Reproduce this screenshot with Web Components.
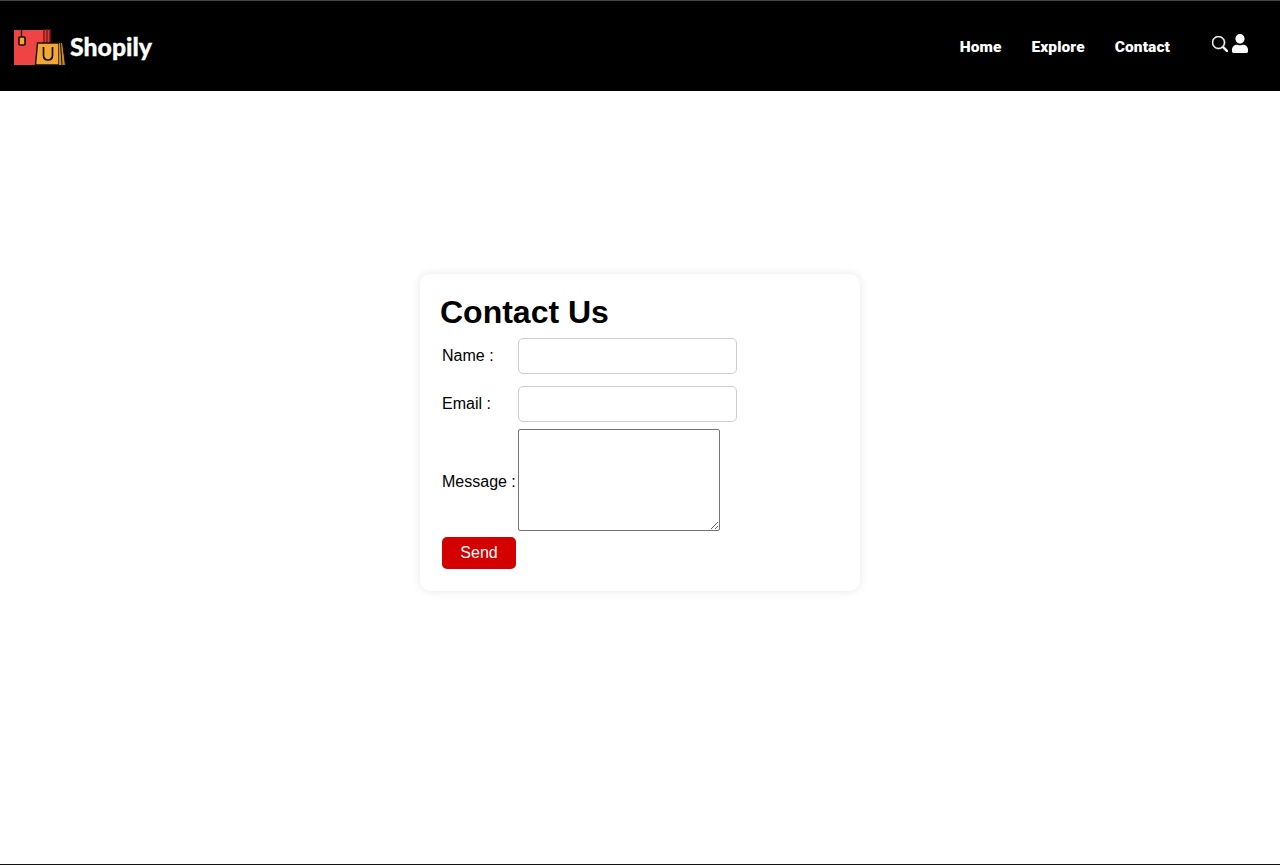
<!DOCTYPE html>
<html lang="en">
<head>
<meta charset="utf-8">
<title>Shopily</title>
<style>
  html, body { margin: 0; height: 100%; background: #fff; }
  body { display: flex; flex-direction: column; font-family: "Liberation Sans", Arial, sans-serif; box-sizing: border-box; height: 865px; overflow: hidden; border-bottom: 1px solid #111; }
</style>
</head>
<body>
<site-header></site-header>
<contact-page>
  <contact-card heading="Contact Us"></contact-card>
</contact-page>

<script>
// Header with logo, nav links and the two icons
class SiteHeader extends HTMLElement {
  constructor() {
    super();
    this.attachShadow({ mode: 'open' });
  }

  connectedCallback() {
    this.shadowRoot.innerHTML = `
      <style>
        :host {
          display: block;
          background: #000;
          border-top: 1px solid #444;
          color: #fff;
        }
        .bar {
          height: 90px;
          display: flex;
          align-items: center;
          padding: 0 32px 0 14px;
        }
        .logo {
          display: flex;
          align-items: center;
          gap: 4px;
          font-family: Lato, sans-serif;
          font-weight: 900;
          font-size: 24.8px;
          -webkit-text-stroke: 0.3px #fff;
          color: #fff;
          text-decoration: none;
        }
        .logo svg { display: block; }
        nav {
          margin-left: auto;
          display: flex;
          gap: 30px;
          padding-top: 2px;
        }
        nav a {
          color: #fff;
          text-decoration: none;
          font-family: Roboto, sans-serif;
          font-weight: 900;
          font-size: 15.5px;
          letter-spacing: 0.1px;
        }
        .icons {
          margin: 0 0 5px 42px;
          display: flex;
          align-items: center;
          gap: 4px;
        }
        .icons svg { display: block; fill: #fff; }
        .icons .search { stroke: #fff; stroke-width: 0.6; }
      </style>
      <div class="bar">
        <a class="logo" href="#">
          <svg width="52" height="40" viewBox="0 0 52 40">
            <path d="M0 4h36v35H0z" fill="#ef4444"/>
            <path d="M29 4h7v14h-7z" fill="#e53935"/>
            <path d="M30 3v14M33 3v14M36 3v14" stroke="#7a1a1a" stroke-width="1.4" fill="none"/>
            <path d="M7.5 4v7" stroke="#111" stroke-width="1.3"/>
            <rect x="5" y="11" width="6" height="8" rx="1" fill="#f5a733" stroke="#111" stroke-width="1.6"/>
            <path d="M23.5 17h21.5v22H21.5z" fill="#f5a733" stroke="#111" stroke-width="1.4"/>
            <path d="M45 17h3l3.5 22H45z" fill="#c98a2b"/>
            <path d="M46.5 17l1.5 22M49 17l2.3 22" stroke="#111" stroke-width="1"/>
            <path d="M29.5 21v8q0 5 4.5 5t4.5-5v-8" fill="none" stroke="#111" stroke-width="1.7"/>
          </svg>
          <span>Shopily</span>
        </a>
        <nav>
          <a href="#">Home</a>
          <a href="#">Explore</a>
          <a href="#">Contact</a>
        </nav>
        <div class="icons">
          <svg class="search" width="16" height="16" viewBox="0 0 16 16"><path d="M11.742 10.344a6.5 6.5 0 1 0-1.397 1.398h-.001c.03.04.062.078.098.115l3.85 3.85a1 1 0 0 0 1.415-1.414l-3.85-3.85a1.007 1.007 0 0 0-.115-.1zM12 6.5a5.5 5.5 0 1 1-11 0 5.5 5.5 0 0 1 11 0z"/></svg>
          <svg width="16" height="19" viewBox="0 0 448 512" preserveAspectRatio="none"><path d="M224 256c70.7 0 128-57.3 128-128S294.7 0 224 0 96 57.3 96 128s57.3 128 128 128zm89.6 32h-16.7c-22.2 10.2-46.9 16-72.9 16s-50.6-5.8-72.9-16h-16.7C60.2 288 0 348.2 0 422.4V464c0 26.5 21.5 48 48 48h352c26.5 0 48-21.5 48-48v-41.6c0-74.2-60.2-134.4-134.4-134.4z"/></svg>
        </div>
      </div>
    `;
  }
}

// Centers whatever is slotted in the space under the header
class ContactPage extends HTMLElement {
  constructor() {
    super();
    this.attachShadow({ mode: 'open' });
    this.shadowRoot.innerHTML = `
      <style>
        :host {
          display: flex;
          flex: 1;
          justify-content: center;
          align-items: flex-start;
          padding-top: 183px;
        }
      </style>
      <slot></slot>
    `;
  }
}

class ContactCard extends HTMLElement {
  constructor() {
    super();
    this.attachShadow({ mode: 'open' });
  }

  connectedCallback() {
    this.shadowRoot.innerHTML = `
      <style>
        :host {
          display: block;
          width: 440px;
          height: 317px;
          box-sizing: border-box;
          padding: 20px;
          background: #fff;
          border-radius: 10px;
          box-shadow: 0 0 10px rgba(0,0,0,0.1);
          font-family: "Liberation Sans", Arial, sans-serif;
          font-size: 16px;
          color: #000;
        }
        h1 {
          margin: 0 0 8px;
          font-size: 32px;
          line-height: 36px;
          font-weight: bold;
        }
        form {
          display: grid;
          grid-template-columns: 74px auto;
          column-gap: 2px;
          justify-content: start;
          align-items: center;
          padding-left: 2px;
        }
        input {
          display: block;
          box-sizing: border-box;
          width: 219px;
          height: 36px;
          margin-bottom: 12px;
          padding: 8px;
          background: #fff;
          border: 1px solid #ccc;
          border-radius: 5px;
        }
        input.last { margin-bottom: 7px; }
        textarea {
          display: block;
          box-sizing: border-box;
          width: 202px;
          height: 102px;
          margin-bottom: 6px;
          padding: 2px;
          border: 1px solid #767676;
          border-radius: 2px;
          background: #fff;
        }
        label.top { margin-bottom: 12px; }
        label.mid { margin-bottom: 7px; }
        label.msg { margin-bottom: 2px; white-space: nowrap; }
        button {
          box-sizing: border-box;
          width: 74px;
          height: 32px;
          padding: 0;
          border: 0;
          border-radius: 5px;
          background: #d40000;
          color: #fff;
          font: inherit;
        }
      </style>
      <h1>${this.getAttribute('heading')}</h1>
      <form onsubmit="return false">
        <label class="top" for="n">Name :</label>
        <input id="n" type="text">
        <label class="mid" for="e">Email :</label>
        <input id="e" class="last" type="email">
        <label class="msg" for="m">Message :</label>
        <textarea id="m"></textarea>
        <button type="submit">Send</button>
      </form>
    `;
  }
}

customElements.define('site-header', SiteHeader);
customElements.define('contact-page', ContactPage);
customElements.define('contact-card', ContactCard);
</script>
</body>
</html>
